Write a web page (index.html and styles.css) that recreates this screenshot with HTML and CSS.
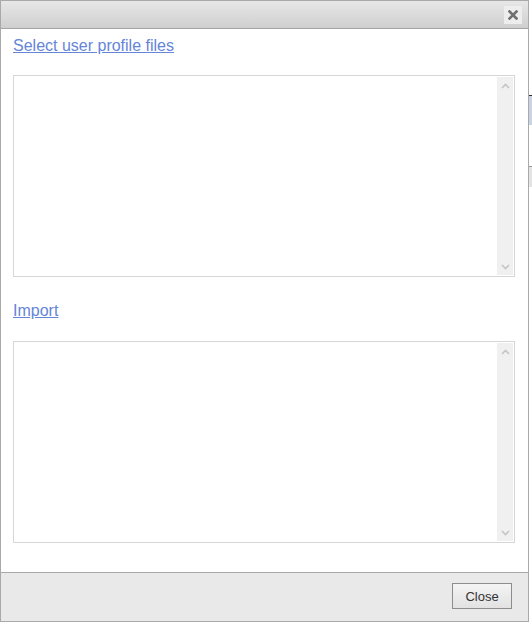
FILE: index.html
```html
<!DOCTYPE html>
<html>
<head>
    <title>Import user profiles</title>
    <link rel="stylesheet" href="styles.css">
</head>
<body>
    <div class="page">
        <div class="page-line"></div>
        <div class="page-band"></div>
        <div class="page-rule"></div>
        <div class="page-block"></div>
    </div>

    <div class="dialog">
        <div class="titlebar">
            <button class="close-x" title="Close">
                <svg width="10" height="10" viewBox="0 0 10 10">
                    <path d="M1.5 1.5 L8.5 8.5 M8.5 1.5 L1.5 8.5" stroke="#6f6f6f" stroke-width="2.6" stroke-linecap="square"/>
                </svg>
            </button>
        </div>

        <div class="content">
            <a href="#" class="link">Select user profile files</a>
            <div class="listbox">
                <div class="list-items"></div>
                <div class="scrollbar">
                    <svg width="9" height="6" viewBox="0 0 9 6"><path d="M1 5 L4.5 1.5 L8 5" fill="none" stroke="#c4c4c4" stroke-width="1.6"/></svg>
                    <svg width="9" height="6" viewBox="0 0 9 6"><path d="M1 1 L4.5 4.5 L8 1" fill="none" stroke="#c4c4c4" stroke-width="1.6"/></svg>
                </div>
            </div>

            <a href="#" class="link">Import</a>
            <div class="listbox">
                <div class="list-items"></div>
                <div class="scrollbar">
                    <svg width="9" height="6" viewBox="0 0 9 6"><path d="M1 5 L4.5 1.5 L8 5" fill="none" stroke="#c4c4c4" stroke-width="1.6"/></svg>
                    <svg width="9" height="6" viewBox="0 0 9 6"><path d="M1 1 L4.5 4.5 L8 1" fill="none" stroke="#c4c4c4" stroke-width="1.6"/></svg>
                </div>
            </div>
        </div>

        <div class="footer">
            <button class="btn">Close</button>
        </div>
    </div>
</body>
</html>
```

FILE: styles.css
```css
body {
    margin: 0;
    font-family: "Liberation Sans", Arial, sans-serif;
    background-color: #fff;
}

/* page behind the dialog, only a sliver shows on the right */
.page {
    padding-top: 95px;
    display: flex;
    flex-direction: column;
    align-items: flex-end;
}

.page-line {
    width: 10px;
    height: 1px;
    background-color: #333;
}

.page-band {
    width: 10px;
    height: 29px;
    background-color: #c9d3e3;
}

.page-rule {
    width: 10px;
    height: 1px;
    margin-top: 41px;
    background-color: #999;
}

.page-block {
    width: 10px;
    height: 20px;
    background-color: #e4e4e4;
}

.dialog {
    position: absolute;
    top: 0;
    left: 0;
    width: 527px;
    height: 620px;
    border: 1px solid #a9a9a9;
    background-color: #fff;
    display: flex;
    flex-direction: column;
}

.titlebar {
    height: 28px;
    border-bottom: 1px solid #a4a4a4;
    background: linear-gradient(#e7e7e7, #cfcfcf);
    display: flex;
    justify-content: flex-end;
    align-items: flex-start;
    padding: 5px 6px 0 0;
    box-sizing: border-box;
}

.close-x {
    width: 18px;
    height: 18px;
    padding: 0;
    border: none;
    background-color: #ededed;
    display: flex;
    align-items: center;
    justify-content: center;
    cursor: pointer;
}

.content {
    flex: 1;
    padding: 8px 12px 0 12px;
    display: flex;
    flex-direction: column;
    align-items: flex-start;
}

.link {
    font-size: 16px;
    line-height: 18px;
    color: #6485d8;
    text-decoration: underline;
}

.listbox {
    width: 502px;
    height: 202px;
    margin: 20px 0 25px 0;
    border: 1px solid #d6d6d6;
    box-sizing: border-box;
    display: flex;
}

.listbox:last-child {
    margin-bottom: 0;
    margin-top: 21px;
}

.list-items {
    flex: 1;
}

.scrollbar {
    width: 16px;
    margin: 1px 1px 1px 0;
    background-color: #f0f0f0;
    display: flex;
    flex-direction: column;
    justify-content: space-between;
    align-items: center;
    padding: 6px 0 5px 0;
}

.footer {
    height: 49px;
    border-top: 1px solid #a9a9a9;
    background-color: #e9e9e9;
    display: flex;
    justify-content: flex-end;
    align-items: flex-start;
    padding: 10px 16px 0 0;
    box-sizing: border-box;
}

.btn {
    width: 60px;
    height: 26px;
    font-family: "Liberation Sans", Arial, sans-serif;
    font-size: 13px;
    color: #333;
    border: 1px solid #8d8d8d;
    background: linear-gradient(#f4f4f4, #e2e2e2);
    cursor: pointer;
}
```
